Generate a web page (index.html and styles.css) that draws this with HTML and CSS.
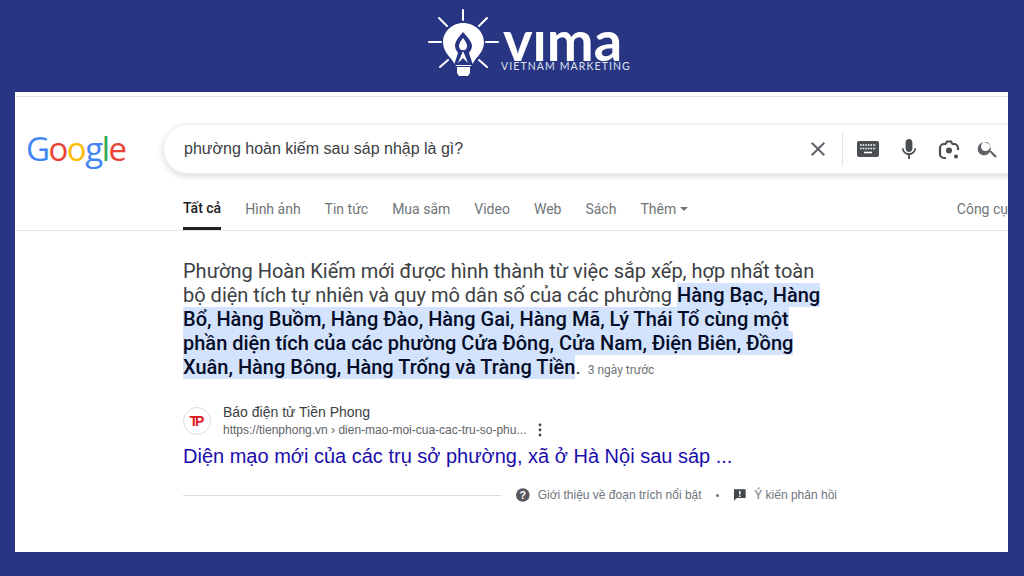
FILE: index.html
```html
<!DOCTYPE html>
<html lang="vi">
<head>
  <meta charset="UTF-8" />
  <title>VIMA - Vietnam Marketing</title>
  <link rel="stylesheet" href="styles.css">
</head>
<body>

  <!-- Brand bar -->
  <header class="brand-bar">
    <svg class="bulb" viewBox="0 0 72 68" width="72" height="68">
      <g stroke="#fff" stroke-width="2" stroke-linecap="round">
        <path d="M35 1v10M1 33h12M58 33h12M11 9l8 8M59 9l-8 8M12 58l8-7M59 58l-8-7"/>
      </g>
      <path fill="#fff" d="M35 14c-11 0-20 9-20 19 0 8 5 13 9 18 2 3 3 5 4 6h15c1-1 2-3 4-6 4-5 9-10 9-18 0-10-9-19-21-19z"/>
      <path fill="#fff" d="M29 58h13v6l-2 3h-9l-2-3z"/>
      <path fill="#283583" d="M35 23c-4 5-8 9-8 14 0 3 2 5 3 7l-4 12h19l-4-12c1-2 3-4 3-7 0-5-5-9-9-14z"/>
      <path fill="#fff" d="M35 29c-2 3-4 5-4 8 0 2 1 3 2 4h4c1-1 2-2 2-4 0-3-2-5-4-8zM35 42l-5 12 5-5 5 5z"/>
    </svg>
    <div class="wordmark">
      <div class="wordmark-name">vıma</div>
      <div class="wordmark-sub">VIETNAM MARKETING</div>
    </div>
  </header>

  <main class="sheet">
    <div class="search-row">
      <div class="google-logo"><span class="g-blue">G</span><span class="g-red">o</span><span class="g-yellow">o</span><span class="g-blue">g</span><span class="g-green">l</span><span class="g-red">e</span></div>
      <div class="search-box">
        <div class="search-text">phường hoàn kiếm sau sáp nhập là gì?</div>
        <svg class="icon-clear" viewBox="0 0 24 24" width="24" height="24"><path fill="#5f6368" d="M19 6.4 17.6 5 12 10.6 6.4 5 5 6.4 10.6 12 5 17.6 6.4 19 12 13.4 17.6 19 19 17.6 13.4 12z"/></svg>
        <span class="search-sep"></span>
        <svg class="icon-key" viewBox="0 0 22 16" width="22" height="16"><rect width="22" height="16" rx="2" fill="#4a4d52"/><path stroke="#fff" stroke-width="1.6" stroke-dasharray="1.6 1" d="M3 4h16M3 7.5h16"/><path stroke="#fff" stroke-width="1.6" d="M7 11.5h8"/></svg>
        <svg class="icon-mic" viewBox="0 0 24 24" width="24" height="24"><path fill="#4a4d52" d="M12 15c1.9 0 3.4-1.5 3.4-3.4V5.4C15.400 3.500 13.900 2 12 2S8.600 3.500 8.600 5.400v6.200C8.600 13.500 10.100 15 12 15z"/><path fill="#4a4d52" d="M17.300 11.200c0 3-2.400 4.900-5.300 4.900s-5.300-1.900-5.300-4.900H5c0 3.500 2.800 6.200 6.100 6.700V22h1.800v-4.100c3.300-.5 6.100-3.200 6.100-6.700z"/></svg>
        <svg class="icon-lens" viewBox="0 0 24 24" width="24" height="24"><path fill="none" stroke="#4a4d52" stroke-width="2.2" d="M9 21H7a4 4 0 0 1-4-4v-6a4 4 0 0 1 4-4h1.500l1.500-2.500h4L15.500 7H17a4 4 0 0 1 4 4v2"/><circle cx="12" cy="13.500" r="3" fill="#4a4d52"/><circle cx="19" cy="19.500" r="2" fill="#4a4d52"/></svg>
        <svg class="icon-search" viewBox="0 0 24 24" width="24" height="24"><path fill="#5f6368" d="M15.500 14h-.8l-.3-.3A6.500 6.500 0 1 0 14 14.700l.3.300v.8l5 5 1.500-1.500zm-6 0a4.500 4.500 0 1 1 0-9 4.500 4.500 0 0 1 0 9z"/></svg>
      </div>
    </div>

    <nav class="tabs">
      <a class="tab tab-active">Tất cả</a>
      <a class="tab">Hình ảnh</a>
      <a class="tab">Tin tức</a>
      <a class="tab">Mua sắm</a>
      <a class="tab">Video</a>
      <a class="tab">Web</a>
      <a class="tab">Sách</a>
      <a class="tab">Thêm <span class="tab-caret"></span></a>
      <a class="tab tab-tools">Công cụ</a>
    </nav>

    <section class="answer">
      <p class="snippet">Phường Hoàn Kiếm mới được hình thành từ việc sắp xếp, hợp nhất toàn<br>bộ diện tích tự nhiên và quy mô dân số của các phường <mark class="hl">Hàng Bạc, Hàng<br>Bổ, Hàng Buồm, Hàng Đào, Hàng Gai, Hàng Mã, Lý Thái Tổ cùng một<br>phần diện tích của các phường Cửa Đông, Cửa Nam, Điện Biên, Đồng<br>Xuân, Hàng Bông, Hàng Trống và Tràng Tiền</mark>. <span class="snippet-date">3 ngày trước</span></p>

      <div class="source">
        <div class="favicon"><span class="favicon-text">TP</span></div>
        <div class="source-info">
          <div class="source-name">Báo điện tử Tiền Phong</div>
          <div class="source-url">https://tienphong.vn › dien-mao-moi-cua-cac-tru-so-phu... <svg class="icon-dots" viewBox="0 0 4 14" width="4" height="14"><circle cx="2" cy="2" r="1.400"/><circle cx="2" cy="7" r="1.400"/><circle cx="2" cy="12" r="1.400"/></svg></div>
        </div>
      </div>
      <a class="result-title">Diện mạo mới của các trụ sở phường, xã ở Hà Nội sau sáp ...</a>

      <div class="about">
        <span class="about-line"></span>
        <svg viewBox="0 0 14 14" width="14" height="14"><circle cx="7" cy="7" r="7" fill="#55585c"/><text x="7" y="11" text-anchor="middle" class="about-q">?</text></svg>
        <span class="about-link">Giới thiệu về đoạn trích nổi bật</span>
        <span class="about-dot"></span>
        <svg viewBox="0 0 14 14" width="14" height="14"><path fill="#45484c" d="M1 1h12v9H4l-3 3z"/><path stroke="#fff" stroke-width="1.500" d="M7 3v3.500M7 7.500v1.500"/></svg>
        <span class="about-link">Ý kiến phản hồi</span>
      </div>
    </section>
  </main>

</body>
</html>
```

FILE: styles.css
```css
/* ==== Page ==== */
html, body {
  height: 576px;
  overflow: hidden;
}
body {
  margin: 0;
  background: #283583;
  font-family: "Liberation Sans", Arial, sans-serif;
  color: #202124;
}

/* ==== Brand bar ==== */
.brand-bar {
  height: 92px;
  display: flex;
  align-items: flex-start;
  padding-left: 428px;
  box-sizing: border-box;
}
.bulb {
  margin-top: 9px;
  flex: none;
}
.wordmark {
  margin-left: 1px;
  color: #fff;
  font-family: Lato, sans-serif;
}
.wordmark-name {
  font-size: 56px;
  font-weight: 700;
  line-height: 56px;
  margin-top: 12px;
  height: 48px;
  margin-left: 2px;
}
.wordmark-sub {
  font-size: 10.500px;
  line-height: 12px;
  letter-spacing: 1.100px;
  color: #dfe2f0;
  white-space: nowrap;
}

/* ==== White sheet ==== */
.sheet {
  margin: 0 16px 0 15px;
  height: 460px;
  background: #fff;
  overflow: hidden;
  box-sizing: border-box;
  padding-top: 4px;
}
.search-row {
  display: flex;
  align-items: center;
  border-top: 1px solid #e4e4e4;
  padding-top: 27px;
}
.google-logo {
  width: 148px;
  flex: none;
  padding-left: 11px;
  box-sizing: border-box;
  font-family: "Open Sans", sans-serif;
  font-size: 33px;
  letter-spacing: -1.500px;
  line-height: 50px;
}
.g-blue { color: #4285f4; }
.g-red { color: #ea4335; }
.g-yellow { color: #fbbc05; }
.g-green { color: #34a853; }

.search-box {
  flex: none;
  width: 880px;
  height: 50px;
  display: flex;
  align-items: center;
  border-radius: 25px;
  background: #fff;
  border: 1px solid #eceef0;
  box-sizing: border-box;
  box-shadow: 0 2px 6px rgba(32,33,36,0.16);
  padding-left: 20px;
}
.search-text {
  width: 632px;
  font-size: 16px;
  color: #3c4043;
  flex: none;
}
.icon-clear { margin-left: -10px; flex: none; }
.search-sep {
  width: 1px;
  height: 34px;
  background: #e2e3e5;
  margin: 0 0 0 12px;
  flex: none;
}
.icon-key { margin-left: 14px; flex: none; }
.icon-mic { margin-left: 18px; flex: none; }
.icon-lens { margin-left: 16px; flex: none; }
.icon-search { margin-left: 15px; flex: none; }

/* ==== Tabs ==== */
.tabs {
  display: flex;
  gap: 24px;
  height: 56px;
  margin-top: 0;
  padding-left: 168px;
  border-bottom: 1px solid #e6e7e9;
  font-family: Roboto, sans-serif;
  font-size: 14px;
  color: #70757a;
  position: relative;
}
.tab {
  display: flex;
  align-items: center;
  gap: 4px;
  height: 56px;
  box-sizing: border-box;
  padding-top: 14px;
  white-space: nowrap;
}
.tab-active {
  color: #202124;
  font-weight: 500;
  border-bottom: 3px solid #202124;
}
.tab-caret {
  width: 0;
  height: 0;
  border-left: 4px solid transparent;
  border-right: 4px solid transparent;
  border-top: 4px solid #70757a;
}
.tab-tools {
  margin-left: auto;
}

/* ==== Answer block ==== */
.answer {
  width: 654px;
  margin-left: 168px;
  padding-top: 28px;
}
.snippet {
  margin: 0;
  font-family: Roboto, sans-serif;
  font-size: 20px;
  line-height: 24px;
  color: #3c4043;
  white-space: nowrap;
}
.hl {
  background: #d3e3fd;
  color: #040c28;
  font-weight: 500;
}
.snippet-date {
  font-size: 12px;
  color: #70757a;
  margin-left: 2px;
}

.source {
  display: flex;
  align-items: center;
  gap: 12px;
  margin-top: 21px;
}
.favicon {
  width: 28px;
  height: 28px;
  border-radius: 50%;
  background: #fff;
  border: 1px solid #dadce0;
  box-sizing: border-box;
  display: flex;
  align-items: center;
  justify-content: center;
  flex: none;
}
.favicon-text {
  font-size: 14px;
  font-weight: 700;
  color: #e01b22;
  letter-spacing: -3px;
  margin-left: -3px;
}
.source-name {
  font-size: 14px;
  line-height: 18px;
  color: #3c4043;
}
.source-url {
  display: flex;
  align-items: center;
  gap: 12px;
  font-size: 12px;
  line-height: 18px;
  color: #5f6368;
  white-space: nowrap;
}
.icon-dots { fill: #444; flex: none; }

.result-title {
  display: block;
  margin-top: 4px;
  font-size: 20px;
  line-height: 26px;
  color: #1a0dab;
  white-space: nowrap;
}

.about {
  display: flex;
  align-items: center;
  gap: 8px;
  width: 654px;
  margin-top: 19px;
  font-size: 12px;
  color: #70757a;
  white-space: nowrap;
}
.about-line {
  width: 318px;
  height: 1px;
  background: #dadce0;
  margin-right: 7px;
  flex: none;
}
.about-q {
  font-size: 11px;
  font-weight: 700;
  fill: #fff;
}
.about-dot {
  width: 3px;
  height: 3px;
  border-radius: 50%;
  background: #70757a;
  margin: 0 6px;
  flex: none;
}
```
